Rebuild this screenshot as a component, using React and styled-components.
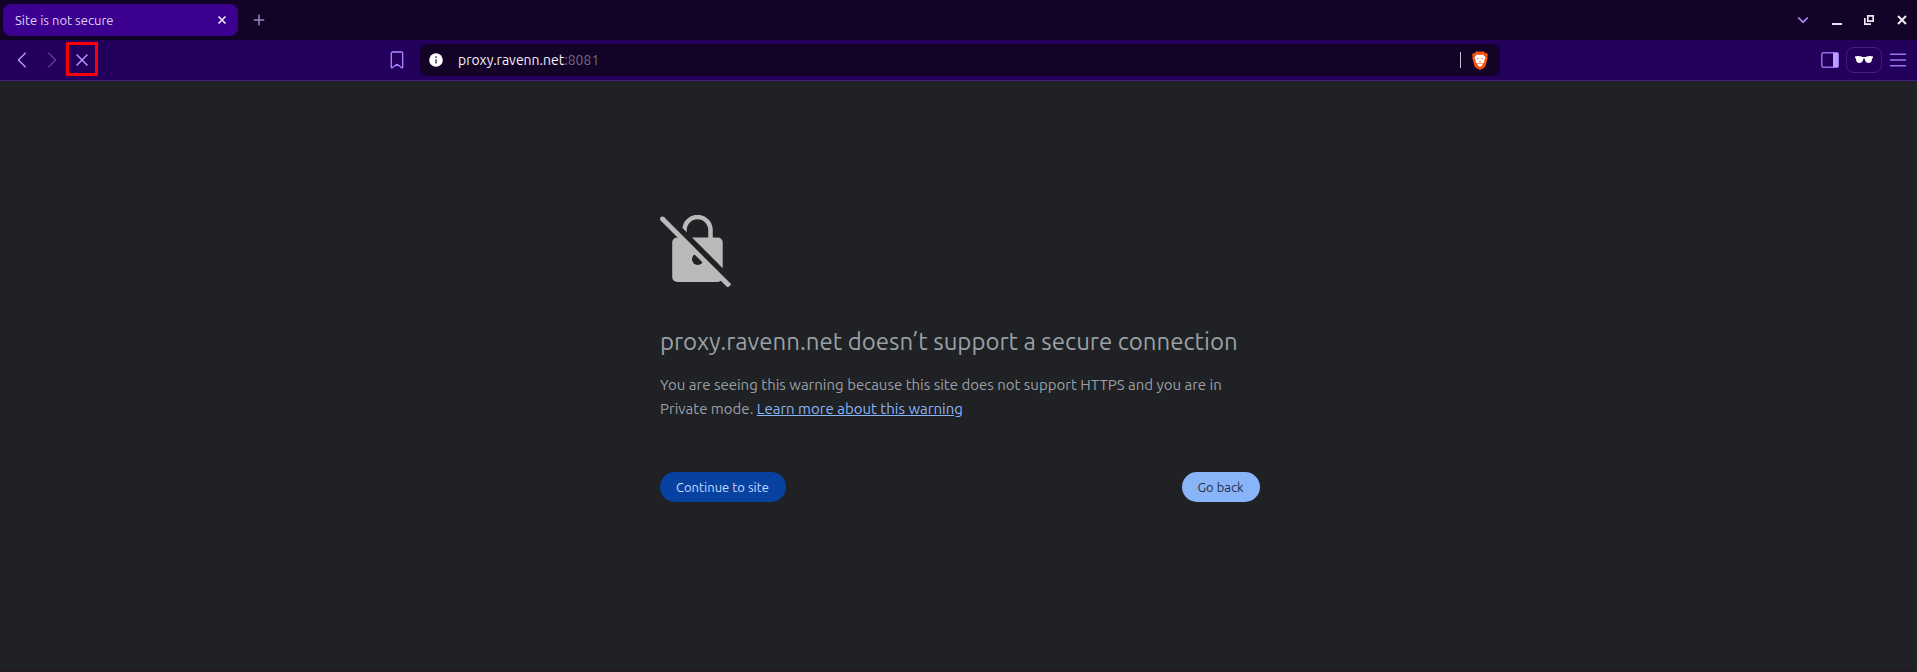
import React from "react";
import styled, { createGlobalStyle } from "styled-components";

const Global = createGlobalStyle`
  * { box-sizing: border-box; }
  html, body { margin: 0; background: #202124; overflow: hidden; }
  body { font-family: Ubuntu, "Noto Sans", "Open Sans", sans-serif; }
  svg { display: block; flex: none; }
`;

const Window = styled.div`
  width: 100%;
  height: 100vh;
  display: flex;
  flex-direction: column;
  background: #202124;
  border-bottom: 1px solid #24152b;
`;

const TabStrip = styled.div`
  flex: none;
  height: 40px;
  padding: 4px 10px 4px 3px;
  display: flex;
  background: #130427;
`;

const Tab = styled.div`
  width: 235px;
  height: 32px;
  padding: 0 11px 0 12px;
  display: flex;
  align-items: center;
  justify-content: space-between;
  border-radius: 8px;
  background: #3b008f;
`;

const Label = styled.span`
  white-space: nowrap;
  color: ${(p) => p.$color};
  font-size: ${(p) => p.$size}px;
`;

const NewTab = styled.div`
  margin-left: 15px;
  display: flex;
  align-items: center;
`;

const WindowControls = styled.div`
  margin-left: auto;
  display: flex;
  align-items: center;
`;

const Control = styled.div`
  margin-left: ${(p) => p.$gap || 0}px;
`;

const Toolbar = styled.div`
  flex: none;
  height: 41px;
  display: flex;
  align-items: center;
  background: #22005c;
  border-bottom: 1px solid #42207f;
`;

const Navigation = styled.div`
  width: 390px;
  padding-left: 12px;
  display: flex;
  align-items: center;
`;

const NavSlot = styled.div`
  width: 20px;
  margin-right: 10px;
  display: flex;
  justify-content: center;
`;

const Highlight = styled.div`
  width: 32px;
  height: 34px;
  margin: -2px 0 0 -6px;
  padding-top: 2px;
  display: flex;
  align-items: center;
  justify-content: center;
  border: 3px solid #fa0008;
`;

const AddressBar = styled.div`
  width: 1080px;
  height: 32px;
  margin-left: 16px;
  padding: 0 12px 0 9px;
  display: flex;
  align-items: center;
  border-radius: 8px;
  background: #130427;
`;

const Address = styled.div`
  margin-left: 15px;
  flex: 1;
  display: flex;
`;

const Divider = styled.div`
  width: 1px;
  height: 16px;
  margin-right: 11px;
  background: #c5c0cc;
`;

const ToolbarEnd = styled.div`
  margin-left: auto;
  padding-right: 11px;
  display: flex;
  align-items: center;
`;

const PrivateBadge = styled.div`
  width: 36px;
  height: 26px;
  margin: 0 8px 0 7px;
  display: flex;
  align-items: center;
  justify-content: center;
  border: 1px solid #44207e;
  border-radius: 8px;
`;

const Page = styled.main`
  flex: 1;
  display: flex;
  justify-content: center;
  padding-top: 134px;
`;

const Warning = styled.section`
  width: 600px;
  margin-left: 3px;
`;

const Title = styled.h1`
  margin: 40px 0 16px;
  color: #9aa0a6;
  font-size: 24px;
  font-weight: 400;
  line-height: 30px;
  white-space: nowrap;
`;

const Message = styled.p`
  margin: 0;
  color: #9aa0a6;
  font-size: 15px;
  line-height: 24px;
  white-space: nowrap;
`;

const Link = styled.a`
  color: #8ab4f8;
  text-decoration: underline;
`;

const Actions = styled.div`
  margin-top: 51px;
  display: flex;
  justify-content: space-between;
`;

const Button = styled.button`
  width: ${(p) => p.$width}px;
  height: 30px;
  padding: 0 1px 0 0;
  border: 0;
  border-radius: 15px;
  background: ${(p) => p.$background};
  color: ${(p) => p.$color};
  font-family: inherit;
  font-size: 13px;
`;

function BraveLion() {
  return (
    <svg width="16" height="19" viewBox="0 0 16 19">
      <path d="M4 .6h8l1.5 1.6 1.4-.1 1 1.9-.6 2 .4 1.2-2.2 8.1-1.4 1.5L8 19l-4.1-2.2-1.4-1.5L.3 7.2.7 6 .1 4l1-1.9 1.4.1z" fill="#f4500f" />
      <path d="M4.8 3.4 8 3.9l3.2-.5L13.6 6.8l-1.5 3 .3 1.4-2.2 1.6.5 1.2L8 15.9 5.3 14l.5-1.2-2.2-1.6.3-1.4-1.5-3z" fill="#fff" />
      <path d="m4 6.9 2.7.4-.5.9zM12 6.9l-2.7.4.5.9zM6.9 9.9h2.2L8 11zM5.9 12.4 8 11.8l2.1.6-.2.6L8 12.4l-1.9.6z" fill="#f4500f" />
    </svg>
  );
}

function BrokenLock() {
  return (
    <svg width="72" height="72" viewBox="0 0 72 72">
      <path d="M24.5 24V15a13 13 0 0 1 26 0v9" fill="none" stroke="#bababa" strokeWidth="4.5" />
      <rect x="12.2" y="22.6" width="50.5" height="44.4" rx="5" fill="#bababa" />
      <circle cx="37.7" cy="44.3" r="5.7" fill="#202124" />
      <path d="M20 10.4 66 56.4V65L20 19Z" fill="#202124" />
      <path d="m2.3 3.8 67.2 67.2" stroke="#bababa" strokeWidth="4.9" />
      <circle cx="2.4" cy="3.9" r="2.4" fill="#bababa" />
    </svg>
  );
}

export default function App() {
  return (
    <Window>
      <Global />
      <TabStrip>
        <Tab>
          <Label $color="#ded2f3" $size={13}>Site is not secure</Label>
          <svg width="10" height="10" viewBox="0 0 10 10" stroke="#ece5f8" strokeWidth="1.7"><path d="m1.5 1.5 7 7m0-7-7 7" /></svg>
        </Tab>
        <NewTab>
          <svg width="12" height="12" viewBox="0 0 12 12" stroke="#9a86c6" strokeWidth="1.5"><path d="M6 .8v10.4M.8 6h10.4" /></svg>
        </NewTab>
        <WindowControls>
          <svg width="12" height="8" viewBox="0 0 12 8" fill="none" stroke="#ab88f8" strokeWidth="1.7"><path d="m1.2 1.5 4.8 4.7 4.8-4.7" /></svg>
          <Control $gap={23}><svg width="10" height="10" viewBox="0 0 10 10" fill="#e8e4ee"><path d="M0 8h10v2H0z" /></svg></Control>
          <Control $gap={22}><svg width="10" height="10" viewBox="0 0 10 10" fill="none" stroke="#eeebf3" strokeWidth="1.7"><path d="M3.8.8h5.4v5.4H3.8zM.8 3v6.2H7" /></svg></Control>
          <Control $gap={23}><svg width="10" height="10" viewBox="0 0 10 10" stroke="#eeebf3" strokeWidth="2"><path d="m1 1 8 8m0-8-8 8" /></svg></Control>
        </WindowControls>
      </TabStrip>
      <Toolbar>
        <Navigation>
          <NavSlot><svg width="10" height="16" viewBox="0 0 10 16" fill="none" stroke="#b397ff" strokeWidth="1.5"><path d="M8.7.8 1.5 8l7.2 7.2" /></svg></NavSlot>
          <NavSlot><svg width="10" height="16" viewBox="0 0 10 16" fill="none" stroke="#5c389a" strokeWidth="1.5"><path d="M1.3.8 8.5 8l-7.2 7.2" /></svg></NavSlot>
          <Highlight><svg width="12" height="12" viewBox="0 0 12 12" stroke="#b397ff" strokeWidth="1.5"><path d="m.5.5 11 11m0-11-11 11" /></svg></Highlight>
        </Navigation>
        <svg width="14" height="18" viewBox="0 0 14 18" fill="none" stroke="#a98aff" strokeWidth="1.3" strokeLinejoin="round"><path d="M2.8 1h8.4q1.5 0 1.5 1.5v13.9q-.2.8-.9.4L7 13.3l-4.8 3.5q-.7.4-.9-.4V2.5Q1.3 1 2.8 1Z" /></svg>
        <AddressBar>
          <svg width="14" height="14" viewBox="0 0 14 14"><circle cx="7" cy="7" r="6.8" fill="#fff" /><path d="M6.2 6.2h1.7v4.3H6.2zM6.2 3.2h1.7v1.7H6.2z" fill="#5d5568" /></svg>
          <Address>
            <Label $color="#f4f1f8" $size={14}>proxy.ravenn.net</Label>
            <Label $color="#716783" $size={14}>:8081</Label>
          </Address>
          <Divider />
          <BraveLion />
        </AddressBar>
        <ToolbarEnd>
          <svg width="18" height="16" viewBox="0 0 18 16"><rect x=".8" y=".8" width="16.4" height="14.4" rx="1.5" fill="none" stroke="#9270e8" strokeWidth="1.5" /><path d="M12 1h4.5l.8.8v12.4l-.8.8H12z" fill="#b8a0ff" /></svg>
          <PrivateBadge>
            <svg width="18" height="8" viewBox="0 0 18 8" fill="#fff"><path d="M0 .4q3.8-.8 7.8.7h2.4q4-1.5 7.8-.7v1.3l-.9.7q-.3 4.6-3.6 4.6-3.3 0-3.9-4.4H8.4Q7.8 7 4.5 7 1.2 7 .9 2.4L0 1.7Z" /></svg>
          </PrivateBadge>
          <svg width="16" height="14" viewBox="0 0 16 14" stroke="#9a79ee" strokeWidth="1.5"><path d="M0 1.2h16M0 7h16M0 12.8h16" /></svg>
        </ToolbarEnd>
      </Toolbar>
      <Page>
        <Warning>
          <BrokenLock />
          <Title>proxy.ravenn.net doesn’t support a secure connection</Title>
          <Message>
            You are seeing this warning because this site does not support HTTPS and you are in
            <br />
            Private mode. <Link>Learn more about this warning</Link>
          </Message>
          <Actions>
            <Button $width={126} $background="#0842a0" $color="#c6dcff">Continue to site</Button>
            <Button $width={78} $background="#8ab4f8" $color="#202e48">Go back</Button>
          </Actions>
        </Warning>
      </Page>
    </Window>
  );
}
